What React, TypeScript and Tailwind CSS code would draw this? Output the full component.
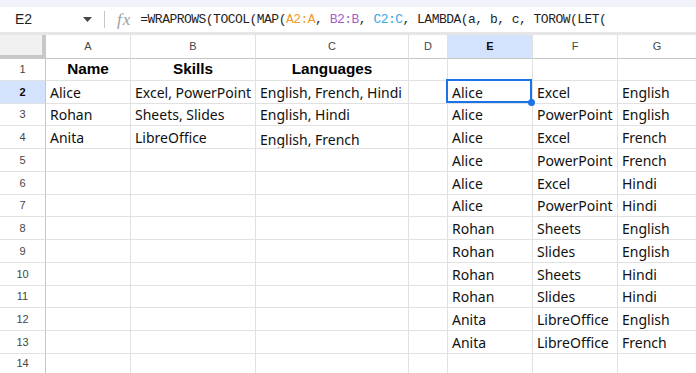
import React from "react";

const W = ["w-[46px]", "w-[85px]", "w-[125px]", "w-[153px]", "w-[39px]", "w-[85px]", "w-[85px]"];

const rows: { h: string; a?: string; b?: string; c?: string; e?: string; f?: string; g?: string }[] = [
  { h: "h-[23px]", a: "Alice", b: "Excel, PowerPoint", c: "English, French, Hindi", e: "Alice", f: "Excel", g: "English" },
  { h: "h-[22px]", a: "Rohan", b: "Sheets, Slides", c: "English, Hindi", e: "Alice", f: "PowerPoint", g: "English" },
  { h: "h-[23px]", a: "Anita", b: "LibreOffice", c: "English, French", e: "Alice", f: "Excel", g: "French" },
  { h: "h-[23px]", e: "Alice", f: "PowerPoint", g: "French" },
  { h: "h-[23px]", e: "Alice", f: "Excel", g: "Hindi" },
  { h: "h-[22px]", e: "Alice", f: "PowerPoint", g: "Hindi" },
  { h: "h-[23px]", e: "Rohan", f: "Sheets", g: "English" },
  { h: "h-[23px]", e: "Rohan", f: "Slides", g: "English" },
  { h: "h-[23px]", e: "Rohan", f: "Sheets", g: "Hindi" },
  { h: "h-[22px]", e: "Rohan", f: "Slides", g: "Hindi" },
  { h: "h-[23px]", e: "Anita", f: "LibreOffice", g: "English" },
  { h: "h-[23px]", e: "Anita", f: "LibreOffice", g: "French" },
];

const cellBase =
  "flex items-center px-[4px] border-r border-b border-[#e1e1e1] whitespace-nowrap overflow-hidden text-[14px] text-[#111] shrink-0";

const headBase =
  " justify-center font-bold font-['Liberation_Sans',Arial,sans-serif] text-[15.3px] text-black";

function RowNum({ n, active }: { n: number; active?: boolean }) {
  return (
    <div
      className={
        "w-[46px] shrink-0 flex items-center justify-center border-r border-b border-r-[#c4c7c5] border-b-[#e1e1e1] text-[11px] font-['Liberation_Sans',Arial,sans-serif] " +
        (active ? "bg-[#d3e3fd] text-[#0b0b0b] font-bold" : "bg-white text-[#444746]")
      }
    >
      {n}
    </div>
  );
}

export default function App() {
  return (
    <div className="w-[696px] h-[373px] overflow-hidden bg-white flex flex-col font-['Noto_Sans',sans-serif]">
      {/* top strip */}
      <div className="h-[7px] bg-[#f0f3f9] shrink-0" />
      {/* formula bar */}
      <div className="h-[28px] shrink-0 bg-white border-b-[3px] border-[#e6e6e6] flex items-center">
        <div className="w-[104px] h-full flex items-center justify-between pl-[15px] pr-[12px] font-['Liberation_Sans',Arial,sans-serif] text-[14px] text-[#1f1f1f]">
          <span>E2</span>
          <svg width="9" height="5" viewBox="0 0 9 5">
            <path d="M0 0 L9 0 L4.5 5 Z" fill="#444746" />
          </svg>
        </div>
        <div className="w-px h-[17px] bg-[#c4c7c5]" />
        <span className="ml-[12px] text-[17px] italic text-[#9aa0a6] font-['Liberation_Serif',serif] leading-none tracking-[1px]">
          fx
        </span>
        <span className="ml-[9px] font-['Liberation_Mono',monospace] text-[13px] tracking-[-0.52px] text-[#1f1f1f] whitespace-nowrap">
          =WRAPROWS(TOCOL(MAP(<span className="text-[#f09a30]">A2:A</span>, <span className="text-[#a35fc6]">B2:B</span>,{" "}
          <span className="text-[#38a8de]">C2:C</span>, LAMBDA(a, b, c, TOROW(LET(
        </span>
      </div>

      {/* column header row */}
      <div className="h-[24px] flex shrink-0">
        <div className="w-[46px] shrink-0 bg-[#f1f1f1] border-r-[4px] border-b-[4px] border-[#c8c8c8]" />
        {["A", "B", "C", "D", "E", "F"].map((l, i) => (
          <div
            key={l}
            className={
              W[i + 1] +
              " shrink-0 flex items-center justify-center border-r border-b border-r-[#e1e1e1] border-b-[#c4c7c5] text-[11px] font-['Liberation_Sans',Arial,sans-serif] " +
              (l === "E" ? "bg-[#d3e3fd] text-[#0b0b0b] font-bold" : "bg-white text-[#444746]")
            }
          >
            {l}
          </div>
        ))}
        <div className="flex-1 flex items-center justify-center border-b border-[#c4c7c5] text-[11px] text-[#444746] font-['Liberation_Sans',Arial,sans-serif]">
          G
        </div>
      </div>

      {/* row 1 */}
      <div className="h-[22px] flex shrink-0">
        <RowNum n={1} />
        <div className={W[1] + " " + cellBase + headBase}>Name</div>
        <div className={W[2] + " " + cellBase + headBase}>Skills</div>
        <div className={W[3] + " " + cellBase + headBase}>Languages</div>
        <div className={W[4] + " " + cellBase} />
        <div className={W[5] + " " + cellBase} />
        <div className={W[6] + " " + cellBase} />
        <div className="flex-1 border-b border-[#e1e1e1]" />
      </div>

      {rows.map((r, i) => (
        <div key={i} className={r.h + " flex shrink-0"}>
          <RowNum n={i + 2} active={i === 0} />
          <div className={W[1] + " " + cellBase}>{r.a}</div>
          <div className={W[2] + " " + cellBase}>{r.b}</div>
          <div className={W[3] + " " + cellBase + (i === 2 ? " pt-[5px]" : "")}>{r.c}</div>
          <div className={W[4] + " " + cellBase} />
          <div className={W[5] + " " + cellBase + " relative overflow-visible"}>
            {r.e}
            {i === 0 && (
              <div className="absolute left-[-2px] top-[-2px] right-0 bottom-0 border-2 border-[#1a73e8] z-10">
                <div className="absolute right-[-5px] bottom-[-5px] w-[7px] h-[7px] rounded-full bg-[#1a73e8]" />
              </div>
            )}
          </div>
          <div className={W[6] + " " + cellBase}>{r.f}</div>
          <div className="flex-1 flex items-center px-[4px] border-b border-[#e1e1e1] whitespace-nowrap overflow-hidden text-[14px] text-[#111]">
            {r.g}
          </div>
        </div>
      ))}

      {/* row 14 */}
      <div className="flex-1 flex">
        <div className="w-[46px] shrink-0 flex items-center justify-center border-r border-[#c4c7c5] text-[11px] text-[#444746] font-['Liberation_Sans',Arial,sans-serif]">
          14
        </div>
        <div className={W[1] + " shrink-0 border-r border-[#e1e1e1]"} />
        <div className={W[2] + " shrink-0 border-r border-[#e1e1e1]"} />
        <div className={W[3] + " shrink-0 border-r border-[#e1e1e1]"} />
        <div className={W[4] + " shrink-0 border-r border-[#e1e1e1]"} />
        <div className={W[5] + " shrink-0 border-r border-[#e1e1e1]"} />
        <div className={W[6] + " shrink-0 border-r border-[#e1e1e1]"} />
        <div className="flex-1" />
      </div>
    </div>
  );
}
